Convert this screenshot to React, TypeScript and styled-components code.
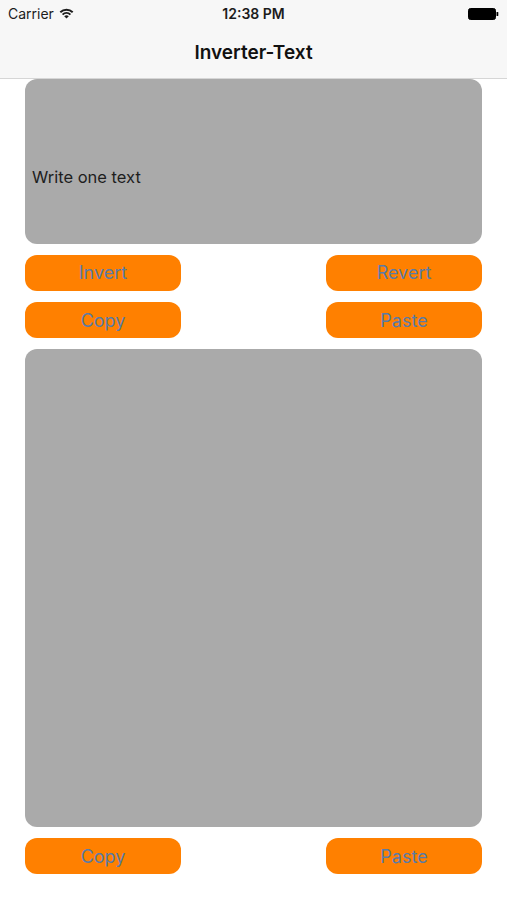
import React from 'react'
import styled, { createGlobalStyle } from 'styled-components'

const GlobalStyle = createGlobalStyle`
  html, body {
    margin: 0;
    padding: 0;
    background: #ffffff;
  }
  body {
    font-family: 'Liberation Sans', Arial, sans-serif;
  }
`

const Screen = styled.div`
  width: 507px;
  height: 900px;
  display: flex;
  flex-direction: column;
  background: #ffffff;
`

const Header = styled.header`
  background: #f7f7f7;
  border-bottom: 1px solid #d6d6d6;
`

const StatusBar = styled.div`
  height: 27px;
  padding: 0 8px;
  display: flex;
  align-items: center;
  justify-content: space-between;
  position: relative;
  font-family: Inter, 'Liberation Sans', sans-serif;
  font-size: 14px;
  color: #1c1c1c;
`

const Carrier = styled.div`
  display: flex;
  align-items: center;
  gap: 5px;
`

const Clock = styled.div`
  position: absolute;
  left: 50%;
  transform: translateX(-50%);
  font-weight: 600;
`

const NavBar = styled.div`
  height: 51px;
  display: flex;
  align-items: center;
  justify-content: center;
  font-family: Inter, 'Liberation Sans', sans-serif;
  font-size: 19px;
  font-weight: 600;
  color: #111;
  box-sizing: border-box;
`

const Content = styled.main`
  display: flex;
  flex-direction: column;
  gap: 10.7px;
  padding: 0 25px;
`

const TextPanel = styled.div<{ $height: number }>`
  height: ${p => p.$height}px;
  background: #aaaaaa;
  border-radius: 12px;
  box-sizing: border-box;
  padding: 88px 7px 0;
  font-family: Inter, 'Liberation Sans', sans-serif;
  font-size: 16.5px;
  line-height: 20px;
  color: #1e1e1e;
`

const ButtonRow = styled.div`
  display: flex;
  justify-content: space-between;
`

const ActionButton = styled.button`
  width: 156px;
  height: 36.5px;
  border: none;
  border-radius: 12px;
  background: #ff8000;
  color: #5a7ba6;
  font-family: Inter, 'Liberation Sans', sans-serif;
  font-size: 18px;
  padding: 0;
  cursor: pointer;
`

const Wifi = () => (
  <svg width="15" height="11" viewBox="0 0 15 11">
    <path d="M0.6 3.6 A10 10 0 0 1 14.4 3.6 L13 5 A8 8 0 0 0 2 5 Z" fill="#1c1c1c" />
    <path d="M2.9 5.9 A6.8 6.8 0 0 1 12.1 5.9 L10.7 7.3 A4.8 4.8 0 0 0 4.3 7.3 Z" fill="#1c1c1c" />
    <path d="M5.2 8.2 A3.4 3.4 0 0 1 9.8 8.2 L7.5 10.6 Z" fill="#1c1c1c" />
  </svg>
)

const Battery = () => (
  <svg width="31" height="12" viewBox="0 0 31 12">
    <rect x="0.5" y="0.5" width="27" height="11" rx="2" fill="#000" stroke="#000" />
    <rect x="28.5" y="4" width="1.8" height="4" rx="0.6" fill="#000" />
  </svg>
)

export default function App() {
  return (
    <>
      <GlobalStyle />
      <Screen>
        <Header>
          <StatusBar>
            <Carrier>
              Carrier <Wifi />
            </Carrier>
            <Clock>12:38 PM</Clock>
            <Battery />
          </StatusBar>
          <NavBar>Inverter-Text</NavBar>
        </Header>
        <Content>
          <TextPanel $height={165}>Write one text</TextPanel>
          <ButtonRow>
            <ActionButton>Invert</ActionButton>
            <ActionButton>Revert</ActionButton>
          </ButtonRow>
          <ButtonRow>
            <ActionButton>Copy</ActionButton>
            <ActionButton>Paste</ActionButton>
          </ButtonRow>
          <TextPanel $height={478} />
          <ButtonRow>
            <ActionButton>Copy</ActionButton>
            <ActionButton>Paste</ActionButton>
          </ButtonRow>
        </Content>
      </Screen>
    </>
  )
}
